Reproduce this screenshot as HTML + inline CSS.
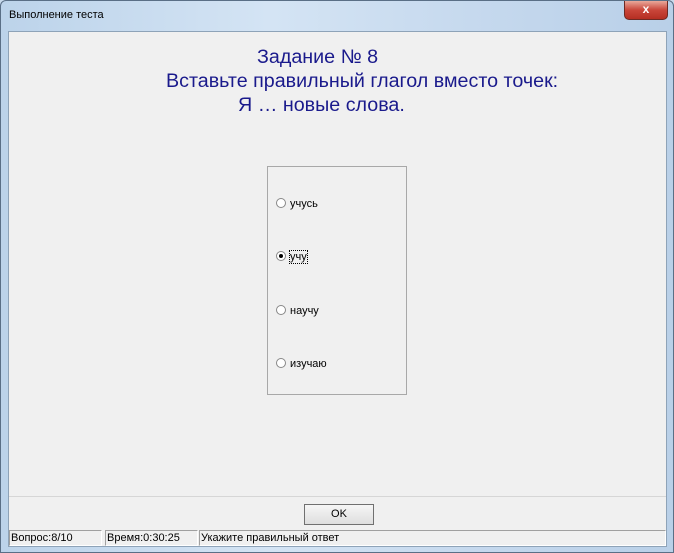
<!DOCTYPE html>
<html><head><meta charset="utf-8"><style>
*{margin:0;padding:0;box-sizing:border-box}
body{width:674px;height:553px;overflow:hidden;font-family:"Liberation Sans",sans-serif;background:#c8daec}
.win{position:absolute;left:0;top:0;width:674px;height:553px;background:linear-gradient(90deg,#bcd3ea,#d4e4f4 40%,#c6d9ee 70%,#b9d0e8);border:1px solid #5a6f86;border-radius:6px 6px 0 0}
.title{position:absolute;left:8px;top:8px;font-size:11px;color:#000}
.close{position:absolute;left:623px;top:0;width:44px;height:19px;background:linear-gradient(#e9a89a,#c9463a 50%,#b52e22);border:1px solid #6d2a24;border-top:none;border-radius:0 0 5px 5px;color:#fff;font-weight:bold;font-size:12px;text-align:center;line-height:17px}
.client{position:absolute;left:7px;top:30px;width:659px;height:516px;background:#f0f0f0;border:1px solid #8ea3b8}
.panel{position:absolute;left:0;top:0;width:657px;height:465px;border-bottom:1px solid #d6d6d6}
.q{position:absolute;color:#1a1a8c;font-size:19.7px;white-space:nowrap}
.box{position:absolute;left:258px;top:134px;width:140px;height:229px;border:1px solid #a8a8a8}
.opt{position:absolute;left:8px;font-size:11px;color:#000;line-height:13px}
.r{display:inline-block;width:10px;height:10px;border-radius:50%;border:1px solid #888;background:#fff;vertical-align:-1px;margin-right:4px;position:relative}
.r.s:after{content:"";position:absolute;left:2px;top:2px;width:4px;height:4px;border-radius:50%;background:#000}
.btn{position:absolute;left:295px;top:472px;width:70px;height:21px;border:1px solid #707070;background:linear-gradient(#f6f6f6,#dedede);font-size:11px;text-align:center;line-height:19px}
.sb{position:absolute;top:498px;height:16px;border:1px solid #a0a0a0;border-right-color:#fff;border-bottom-color:#fff;font-size:11px;line-height:14px;padding-left:1px;white-space:nowrap}
</style></head><body>
<div class="win">
<div class="title">Выполнение теста</div>
<div class="close">x</div>
<div class="client">
<div class="panel">
<div class="q" style="left:248px;top:14px">Задание № 8</div>
<div class="q" style="left:157px;top:38px">Вставьте правильный глагол вместо точек:</div>
<div class="q" style="left:229px;top:62px">Я … новые слова.</div>
<div class="box">
<div class="opt" style="top:31px"><span class="r"></span>учусь</div>
<div class="opt" style="top:84px"><span class="r s"></span><span style="outline:1px dotted #000">учу</span></div>
<div class="opt" style="top:138px"><span class="r"></span>научу</div>
<div class="opt" style="top:191px"><span class="r"></span>изучаю</div>
</div>
</div>
<div class="btn">OK</div>
<div class="sb" style="left:0;width:93px">Вопрос:8/10</div>
<div class="sb" style="left:96px;width:93px">Время:0:30:25</div>
<div class="sb" style="left:190px;width:467px">Укажите правильный ответ</div>
</div>
</div>
</body></html>
